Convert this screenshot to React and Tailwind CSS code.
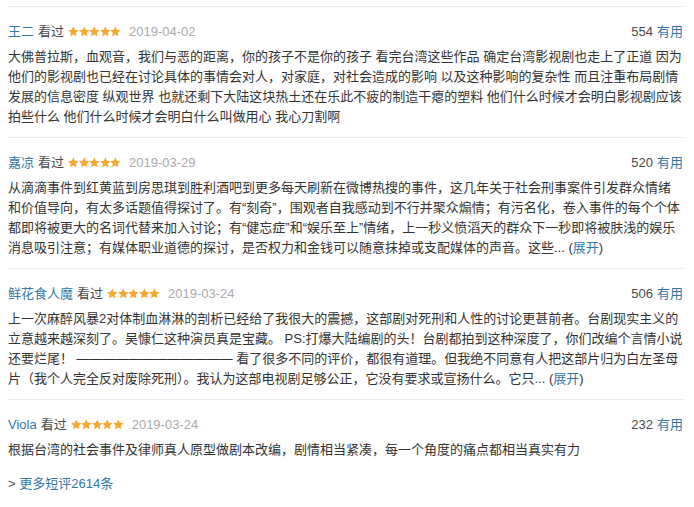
import React from "react";

const Star = () => (
  <svg width="10.6" height="11" viewBox="1 1 22 22" className="inline-block">
    <path d="M12 1.5l3.2 7 7.6.8-5.7 5.1 1.6 7.5L12 18l-6.7 3.9 1.6-7.5L1.2 9.3l7.6-.8z" fill="#f7a630" />
  </svg>
);

const reviews = [
  {
    name: "王二",
    date: "2019-04-02",
    votes: "554",
    lines: [
      "大佛普拉斯，血观音，我们与恶的距离，你的孩子不是你的孩子 看完台湾这些作品 确定台湾影视剧也走上了正道 因为",
      "他们的影视剧也已经在讨论具体的事情会对人，对家庭，对社会造成的影响 以及这种影响的复杂性 而且注重布局剧情",
      "发展的信息密度 纵观世界 也就还剩下大陆这块热土还在乐此不疲的制造干瘪的塑料 他们什么时候才会明白影视剧应该",
      "拍些什么 他们什么时候才会明白什么叫做用心 我心刀割啊",
    ],
  },
  {
    name: "嘉凉",
    date: "2019-03-29",
    votes: "520",
    expand: true,
    lines: [
      "从滴滴事件到红黄蓝到房思琪到胜利酒吧到更多每天刷新在微博热搜的事件，这几年关于社会刑事案件引发群众情绪",
      "和价值导向，有太多话题值得探讨了。有“刻奇”，围观者自我感动到不行并聚众煽情；有污名化，卷入事件的每个个体",
      "都即将被更大的名词代替来加入讨论；有“健忘症”和“娱乐至上”情绪，上一秒义愤滔天的群众下一秒即将被肤浅的娱乐",
      "消息吸引注意；有媒体职业道德的探讨，是否权力和金钱可以随意抹掉或支配媒体的声音。这些... ",
    ],
  },
  {
    name: "鲜花食人魔",
    date: "2019-03-24",
    votes: "506",
    expand: true,
    lines: [
      "上一次麻醉风暴2对体制血淋淋的剖析已经给了我很大的震撼，这部剧对死刑和人性的讨论更甚前者。台剧现实主义的",
      "立意越来越深刻了。吴慷仁这种演员真是宝藏。 PS:打爆大陆编剧的头！台剧都拍到这种深度了，你们改编个言情小说",
      "还要烂尾！ ———————————— 看了很多不同的评价，都很有道理。但我绝不同意有人把这部片归为白左圣母",
      "片（我个人完全反对废除死刑）。我认为这部电视剧足够公正，它没有要求或宣扬什么。它只... ",
    ],
  },
  {
    name: "Viola",
    date: "2019-03-24",
    votes: "232",
    last: true,
    lines: ["根据台湾的社会事件及律师真人原型做剧本改编，剧情相当紧凑，每一个角度的痛点都相当真实有力"],
  },
];

export default function App() {
  return (
    <div
      className="w-[694px] h-[507px] bg-white px-[8px] text-[13px] text-[#333]"
      style={{ fontFamily: '"Liberation Sans", Arial, "Noto Sans CJK SC", sans-serif' }}
    >
      <div className="h-[6px]" />
      <div className="w-[676px]">
        {reviews.map((r, i) => (
          <div key={i} className={`border-t border-[#ececec] pt-[15px] ${r.last ? "pb-[14px]" : "pb-[10px]"}`}>
            <div className="flex items-center justify-between leading-[20px] h-[20px]">
              <div className="flex items-center">
                <span className="text-[#3377aa]">{r.name}</span>
                <span className="ml-[4px] text-[#494949]">看过</span>
                <span className="ml-[4px] flex items-center mt-[-1px]">
                  <Star />
                  <Star />
                  <Star />
                  <Star />
                  <Star />
                </span>
                <span className="ml-[8px] text-[#aaaaaa]">{r.date}</span>
              </div>
              <div className="pr-[1px]">
                <span className="text-[#494949]">{r.votes}</span>
                <span className="ml-[4px] text-[#3377aa]">有用</span>
              </div>
            </div>
            <div className="mt-[5px] leading-[20px] whitespace-nowrap text-[#333]">
              {r.lines.map((l, j) => (
                <div key={j}>
                  {l}
                  {r.expand && j === r.lines.length - 1 && (
                    <span>
                      (<span className="text-[#3377aa]">展开</span>)
                    </span>
                  )}
                </div>
              ))}
            </div>
          </div>
        ))}
        <div className="leading-[20px]">
          <span className="text-[#494949]">&gt; </span>
          <span className="text-[#3377aa]">更多短评2614条</span>
        </div>
      </div>
    </div>
  );
}
